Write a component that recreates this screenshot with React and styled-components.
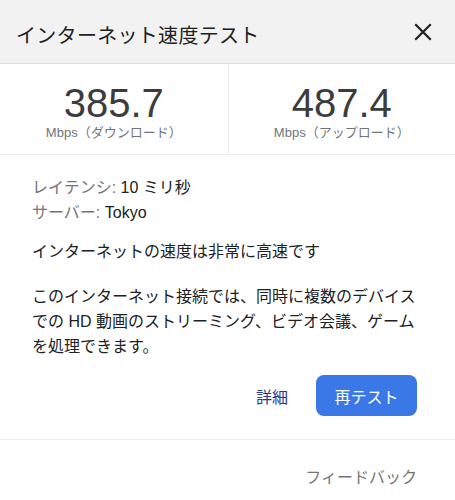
import React from 'react'
import styled, { createGlobalStyle } from 'styled-components'

const GlobalStyle = createGlobalStyle`
    body {
        margin: 0;
        background: #fff;
        font-family: "Liberation Sans", "Noto Sans CJK JP", sans-serif;
        color: #202124;
    }
`

const Card = styled.div`
    width: 455px;
    background: #fff;
`

const Header = styled.header`
    height: 64px;
    background: #f2f2f2;
    border-bottom: 1px solid #dcdcdc;
    display: flex;
    align-items: center;
    justify-content: space-between;
    padding: 0 22px 0 16px;
    box-sizing: border-box;
`

const Title = styled.h1`
    margin: 0;
    font-size: 20px;
    font-weight: 400;
    letter-spacing: 0.3px;
    color: #202124;
    padding-top: 6px;
`

const CloseButton = styled.button`
    border: 0;
    background: none;
    padding: 0;
    width: 20px;
    height: 20px;
    display: flex;
    align-items: center;
    justify-content: center;
    cursor: pointer;
`

const Stats = styled.div`
    display: grid;
    grid-template-columns: 1fr 1fr;
    border-bottom: 1px solid #ececec;
`

const Stat = styled.div`
    height: 90px;
    display: flex;
    flex-direction: column;
    align-items: center;
    padding-top: 17px;
    box-sizing: border-box;
    border-left: ${props => (props.divided ? '1px solid #ececec' : 'none')};
`

const Value = styled.div`
    font-size: 40px;
    line-height: 44px;
    color: #3c3c3c;
`

const Unit = styled.div`
    font-size: 13px;
    line-height: 18px;
    color: #70757a;
    margin-top: -1px;
`

const Body = styled.div`
    padding: 20px 32px 0 32px;
    font-size: 16px;
    line-height: 25px;
`

const Meta = styled.div`
    margin-bottom: 14px;
`

const MetaLabel = styled.span`
    color: #757575;
`

const Paragraph = styled.p`
    margin: 0 0 20px;
    color: #202124;
`

const Actions = styled.div`
    display: flex;
    justify-content: flex-end;
    align-items: center;
    gap: 28px;
    padding: 0 38px 23px 0;
    margin-top: -4px;
`

const LinkButton = styled.button`
    border: 0;
    background: none;
    padding: 0;
    font: inherit;
    font-size: 16px;
    color: #2c3592;
    cursor: pointer;
`

const PrimaryButton = styled.button`
    border: 0;
    width: 101px;
    height: 41px;
    border-radius: 8px;
    background: #3b78e7;
    color: #fff;
    font: inherit;
    font-size: 16px;
    cursor: pointer;
`

const Footer = styled.div`
    border-top: 1px solid #ececec;
    display: flex;
    justify-content: flex-end;
    padding: 25px 38px 0 0;
    font-size: 16px;
    line-height: 25px;
    color: #757575;
`

const CloseIcon = () => (
    <svg width="18" height="18" viewBox="0 0 18 18">
        <path d="M2 2 L16 16 M16 2 L2 16" stroke="#202124" strokeWidth="2.2" strokeLinecap="square" />
    </svg>
)

const App = () => (
    <Card>
        <GlobalStyle />
        <Header>
            <Title>インターネット速度テスト</Title>
            <CloseButton aria-label="閉じる"><CloseIcon /></CloseButton>
        </Header>
        <Stats>
            <Stat>
                <Value>385.7</Value>
                <Unit>Mbps（ダウンロード）</Unit>
            </Stat>
            <Stat divided>
                <Value>487.4</Value>
                <Unit>Mbps（アップロード）</Unit>
            </Stat>
        </Stats>
        <Body>
            <Meta>
                <div><MetaLabel>レイテンシ:</MetaLabel> 10 ミリ秒</div>
                <div><MetaLabel>サーバー:</MetaLabel> Tokyo</div>
            </Meta>
            <Paragraph>インターネットの速度は非常に高速です</Paragraph>
            <Paragraph>
                このインターネット接続では、同時に複数のデバイスでの HD 動画のストリーミング、ビデオ会議、ゲームを処理できます。
            </Paragraph>
        </Body>
        <Actions>
            <LinkButton>詳細</LinkButton>
            <PrimaryButton>再テスト</PrimaryButton>
        </Actions>
        <Footer>フィードバック</Footer>
    </Card>
)

export default App
